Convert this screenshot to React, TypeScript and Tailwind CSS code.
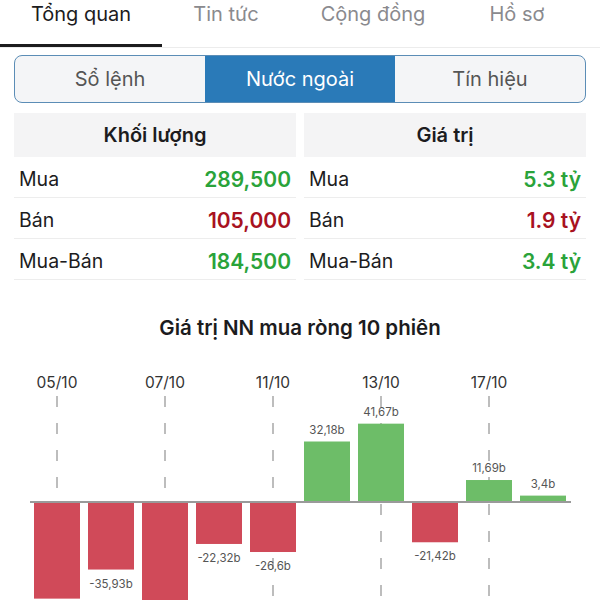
import { type ReactNode } from 'react'

const navTabs = [
  { label: 'Tổng quan', w: 'w-[162px]', active: true },
  { label: 'Tin tức', w: 'w-[128px]', active: false },
  { label: 'Cộng đồng', w: 'w-[166px]', active: false },
  { label: 'Hồ sơ', w: 'w-[122px]', active: false },
]

const segments = ['Sổ lệnh', 'Nước ngoài', 'Tín hiệu']

type Row = { label: string; value: string; up: boolean }

const volumeRows: Row[] = [
  { label: 'Mua', value: '289,500', up: true },
  { label: 'Bán', value: '105,000', up: false },
  { label: 'Mua-Bán', value: '184,500', up: true },
]

const valueRows: Row[] = [
  { label: 'Mua', value: '5.3 tỷ', up: true },
  { label: 'Bán', value: '1.9 tỷ', up: false },
  { label: 'Mua-Bán', value: '3.4 tỷ', up: true },
]

// giá trị mua ròng theo phiên (tỷ)
const sessions = [
  { date: '05/10', v: -51.4 },
  { date: '06/10', v: -35.93 },
  { date: '07/10', v: -58.2 },
  { date: '10/10', v: -22.32 },
  { date: '11/10', v: -26.6 },
  { date: '12/10', v: 32.18 },
  { date: '13/10', v: 41.67 },
  { date: '14/10', v: -21.42 },
  { date: '17/10', v: 11.69 },
  { date: '18/10', v: 3.4 },
]

function StatTable({ title, rows }: { title: string; rows: Row[] }): ReactNode {
  return (
    <div>
      <div className="flex h-[44px] items-center justify-center bg-[#f4f4f5] text-[20px] font-semibold text-[#1c1c1e]">
        {title}
      </div>
      {rows.map((r) => (
        <div
          key={r.label}
          className="flex h-[41px] items-center justify-between border-b border-[#ededed] px-[5px] pt-[5px]"
        >
          <span className="text-[19.5px] text-[#1c1c1e]">{r.label}</span>
          <span
            className={`text-[21px] font-semibold ${r.up ? 'text-[#2aa33a]' : 'text-[#a8121f]'}`}
          >
            {r.value}
          </span>
        </div>
      ))}
    </div>
  )
}

function NetChart(): ReactNode {
  const height = 262
  const axisY = 161
  const scale = 1.88
  const fmt = (v: number) => `${v}`.replace('.', ',') + 'b'
  return (
    <svg width="600" height={height} className="block">
      {sessions.map((s, i) => {
        if (i % 2 !== 0) return null
        const cx = 34 + i * 54 + 23
        return (
          <g key={s.date}>
            <text x={cx} y={47} textAnchor="middle" fontSize="15.5" fill="#333">
              {s.date}
            </text>
            <line
              x1={cx}
              x2={cx}
              y1={55}
              y2={height}
              stroke="#9a9a9a"
              strokeWidth="1.3"
              strokeDasharray="11 16"
            />
          </g>
        )
      })}
      {sessions.map((s, i) => {
        const x = 34 + i * 54
        const h = Math.abs(s.v) * scale
        const up = s.v > 0
        const labelY = up ? axisY - h - 8 : axisY + h + 18
        return (
          <g key={i}>
            <rect
              x={x}
              y={up ? axisY - h : axisY}
              width={46}
              height={h}
              fill={up ? '#6dbd68' : '#d04a59'}
            />
            {labelY < height - 4 && (
              <text x={x + 23} y={labelY} textAnchor="middle" fontSize="11.5" fill="#555">
                {fmt(s.v)}
              </text>
            )}
          </g>
        )
      })}
      <line x1={30} x2={571} y1={axisY} y2={axisY} stroke="#9a9a9a" strokeWidth="2" />
    </svg>
  )
}

export default function App(): ReactNode {
  return (
    <div className="h-[600px] w-[600px] overflow-hidden bg-white font-['Inter','Noto_Sans',sans-serif]">
      <div className="flex h-[48px] border-b border-[#ececec]">
        {navTabs.map((t) => (
          <div
            key={t.label}
            className={`${t.w} h-full text-center text-[20px] leading-[28px] ${
              t.active ? 'border-b-[3px] border-[#1c1c1e] text-[#1c1c1e]' : 'text-[#8a8a8e]'
            }`}
          >
            {t.label}
          </div>
        ))}
      </div>

      <div className="mx-[14px] mt-[7px] grid h-[48px] grid-cols-3 overflow-hidden rounded-[8px] border-[1.5px] border-[#5b8db6] bg-[#f4f5f7]">
        {segments.map((s, i) => (
          <div
            key={s}
            className={`flex items-center justify-center text-[20px] ${
              i === 1 ? 'bg-[#2a7ab8] text-white' : 'text-[#555]'
            }`}
          >
            {s}
          </div>
        ))}
      </div>

      <div className="mx-[14px] mt-[10px] grid grid-cols-2 gap-[8px]">
        <StatTable title="Khối lượng" rows={volumeRows} />
        <StatTable title="Giá trị" rows={valueRows} />
      </div>

      <div className="mt-[35px] text-center text-[20.5px] font-semibold leading-[26px] text-[#1c1c1e]">
        Giá trị NN mua ròng 10 phiên
      </div>

      <NetChart />
    </div>
  )
}
